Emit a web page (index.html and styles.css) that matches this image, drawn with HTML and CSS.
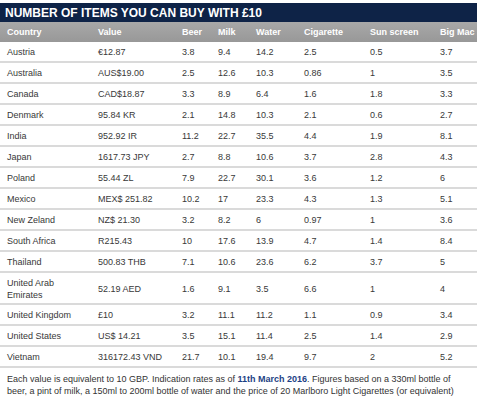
FILE: index.html
```html
<!DOCTYPE html>
<html>
<head>
<meta charset="utf-8">
<link rel="stylesheet" href="styles.css">
</head>
<body>
<div class="panel">
  <div class="title">NUMBER OF ITEMS YOU CAN BUY WITH £10</div>
  <table class="items">
    <colgroup>
      <col class="c-country"><col class="c-value"><col class="c-beer"><col class="c-milk"><col class="c-water"><col class="c-cig"><col class="c-sun"><col class="c-mac">
    </colgroup>
    <thead>
      <tr><th>Country</th><th>Value</th><th>Beer</th><th>Milk</th><th>Water</th><th>Cigarette</th><th>Sun screen</th><th>Big Mac</th></tr>
    </thead>
    <tbody>
      <tr><td>Austria</td><td>€12.87</td><td>3.8</td><td>9.4</td><td>14.2</td><td>2.5</td><td>0.5</td><td>3.7</td></tr>
      <tr><td>Australia</td><td>AUS$19.00</td><td>2.5</td><td>12.6</td><td>10.3</td><td>0.86</td><td>1</td><td>3.5</td></tr>
      <tr><td>Canada</td><td>CAD$18.87</td><td>3.3</td><td>8.9</td><td>6.4</td><td>1.6</td><td>1.8</td><td>3.3</td></tr>
      <tr><td>Denmark</td><td>95.84 KR</td><td>2.1</td><td>14.8</td><td>10.3</td><td>2.1</td><td>0.6</td><td>2.7</td></tr>
      <tr><td>India</td><td>952.92 IR</td><td>11.2</td><td>22.7</td><td>35.5</td><td>4.4</td><td>1.9</td><td>8.1</td></tr>
      <tr><td>Japan</td><td>1617.73 JPY</td><td>2.7</td><td>8.8</td><td>10.6</td><td>3.7</td><td>2.8</td><td>4.3</td></tr>
      <tr><td>Poland</td><td>55.44 ZL</td><td>7.9</td><td>22.7</td><td>30.1</td><td>3.6</td><td>1.2</td><td>6</td></tr>
      <tr><td>Mexico</td><td>MEX$ 251.82</td><td>10.2</td><td>17</td><td>23.3</td><td>4.3</td><td>1.3</td><td>5.1</td></tr>
      <tr><td>New Zeland</td><td>NZ$ 21.30</td><td>3.2</td><td>8.2</td><td>6</td><td>0.97</td><td>1</td><td>3.6</td></tr>
      <tr><td>South Africa</td><td>R215.43</td><td>10</td><td>17.6</td><td>13.9</td><td>4.7</td><td>1.4</td><td>8.4</td></tr>
      <tr><td>Thailand</td><td>500.83 THB</td><td>7.1</td><td>10.6</td><td>23.6</td><td>6.2</td><td>3.7</td><td>5</td></tr>
      <tr class="tall"><td>United Arab Emirates</td><td>52.19 AED</td><td>1.6</td><td>9.1</td><td>3.5</td><td>6.6</td><td>1</td><td>4</td></tr>
      <tr><td>United Kingdom</td><td>£10</td><td>3.2</td><td>11.1</td><td>11.2</td><td>1.1</td><td>0.9</td><td>3.4</td></tr>
      <tr><td>United States</td><td>US$ 14.21</td><td>3.5</td><td>15.1</td><td>11.4</td><td>2.5</td><td>1.4</td><td>2.9</td></tr>
      <tr><td>Vietnam</td><td>316172.43 VND</td><td>21.7</td><td>10.1</td><td>19.4</td><td>9.7</td><td>2</td><td>5.2</td></tr>
    </tbody>
  </table>
  <p class="note">Each value is equivalent to 10 GBP. Indication rates as of <strong class="date">11th March 2016</strong>. Figures based on a 330ml bottle of beer, a pint of milk, a 150ml to 200ml bottle of water and the price of 20 Marlboro Light Cigarettes (or equivalent)</p>
</div>
</body>
</html>
```
FILE: styles.css
```css
html, body {
  margin: 0;
  padding: 0;
  background: #ffffff;
}
body {
  font-family: "Liberation Sans", Arial, sans-serif;
  font-size: 9px;
  color: #383838;
}
.panel {
  width: 477px;
  padding-top: 3px;
}
.title {
  background: #0e2347;
  color: #ffffff;
  font-weight: bold;
  font-size: 12px;
  height: 19px;
  line-height: 20px;
  padding-left: 5px;
  white-space: nowrap;
}
.items {
  width: 477px;
  table-layout: fixed;
  border-collapse: collapse;
}
.c-country { width: 96px; }
.c-value { width: 84px; }
.c-beer { width: 36px; }
.c-milk { width: 38px; }
.c-water { width: 48px; }
.c-cig { width: 66px; }
.c-sun { width: 70px; }
.c-mac { width: 39px; }
.items th {
  background: linear-gradient(#a8a8a8, #989898);
  color: #ffffff;
  font-weight: bold;
  text-align: left;
  line-height: 19px;
  padding: 1px 0 0 2px;
  white-space: nowrap;
}
.items td {
  line-height: 17px;
  padding: 2px 0 0 2px;
  border-bottom: 2px solid #dadada;
  vertical-align: middle;
}
.items th:first-child,
.items td:first-child {
  padding-left: 7px;
  padding-right: 12px;
}
.items tr.tall td {
  line-height: 12px;
  padding-top: 4px;
  padding-bottom: 2px;
}
.note {
  margin: 0;
  padding: 5px 14px 0 7px;
  line-height: 12px;
  color: #333333;
}
.date {
  color: #1d3f85;
}
```
